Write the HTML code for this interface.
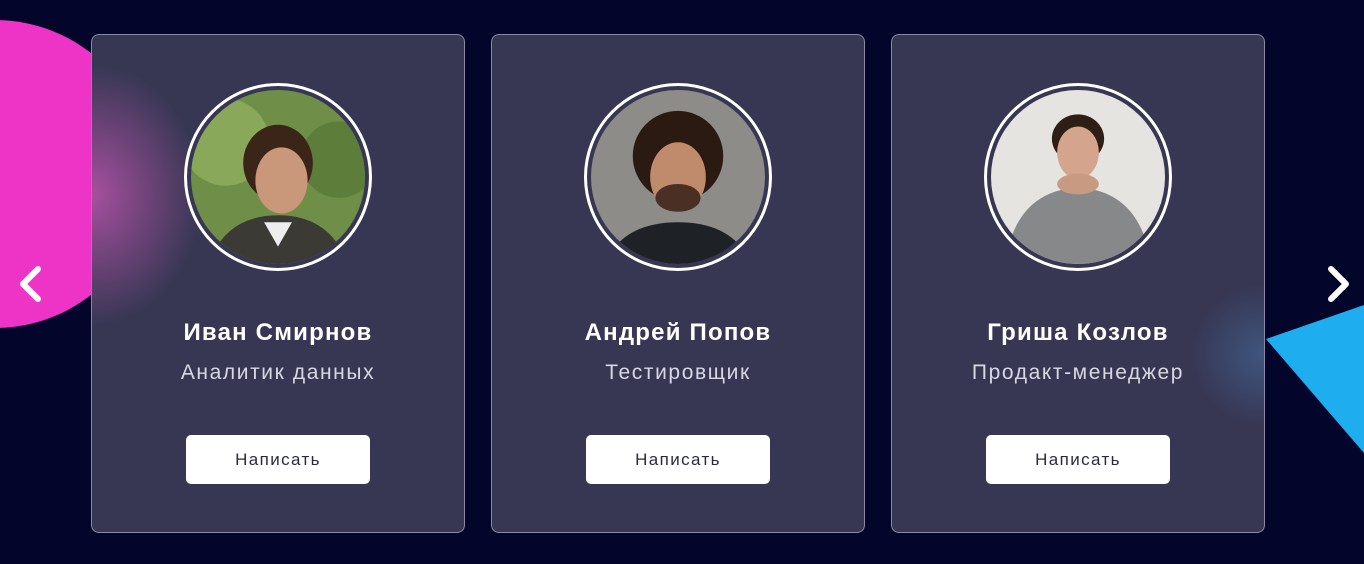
<!DOCTYPE html>
<html><head><meta charset="utf-8"><style>
*{margin:0;padding:0;box-sizing:border-box}
body{width:1364px;height:564px;background:#03062a;position:relative;overflow:hidden;font-family:"Liberation Sans",sans-serif}
.pink{position:absolute;left:-160px;top:20px;width:310px;height:308px;border-radius:50%;background:#ee34c6}
.tri{position:absolute;left:0;top:0}
.card{position:absolute;top:34px;width:374px;height:499px;border:1px solid #8a8aa6;border-radius:8px;background:#373754;overflow:hidden}
.glow{position:absolute;border-radius:50%}
.av{position:absolute;left:92px;top:48px;width:188px;height:188px;border-radius:50%;border:3px solid #fff;padding:4px;background:#373754}
.av svg{display:block;width:100%;height:100%;border-radius:50%}
.name{position:absolute;top:284px;width:100%;text-align:center;color:#fff;font-weight:bold;font-size:24px;letter-spacing:1.2px}
.role{position:absolute;top:326px;width:100%;text-align:center;color:#d8d8e2;font-size:21px;letter-spacing:1.6px}
.btn{position:absolute;left:94px;top:400px;width:184px;height:49px;background:#fff;border-radius:5px;text-align:center;line-height:49px;color:#2a2a44;font-size:17px;letter-spacing:1.4px}
.arr{position:absolute;top:265px}
</style></head><body>
<div class="pink"></div>
<svg class="tri" width="1364" height="564"><polygon points="1266,339 1364,305 1364,453" fill="#1eaef0"/></svg>

<div class="card" style="left:91px">
<div class="glow" style="left:-110px;top:30px;width:220px;height:260px;background:radial-gradient(closest-side,rgba(214,90,190,.7),rgba(214,90,190,0))"></div>
<div class="av"><svg viewBox="0 0 100 100"><rect width="100" height="100" fill="#6f8f48"/><circle cx="20" cy="30" r="25" fill="#8aa85a"/><circle cx="85" cy="40" r="22" fill="#5d7d3a"/><ellipse cx="50" cy="42" rx="20" ry="22" fill="#3a2518"/><ellipse cx="52" cy="52" rx="15" ry="19" fill="#c9977a"/><path d="M10 100 Q20 72 50 72 Q80 72 90 100Z" fill="#3b3a34"/><path d="M42 76 L50 90 L58 76Z" fill="#eee"/></svg></div>
<div class="name">Иван Смирнов</div><div class="role">Аналитик данных</div><div class="btn">Написать</div></div>

<div class="card" style="left:491px">
<div class="av"><svg viewBox="0 0 100 100"><rect width="100" height="100" fill="#8d8c88"/><ellipse cx="50" cy="38" rx="26" ry="26" fill="#2a1a12"/><ellipse cx="50" cy="50" rx="16" ry="20" fill="#c08a6c"/><ellipse cx="50" cy="62" rx="13" ry="8" fill="#4a3024"/><path d="M8 100 Q18 76 50 76 Q82 76 92 100Z" fill="#1e2226"/></svg></div>
<div class="name">Андрей Попов</div><div class="role">Тестировщик</div><div class="btn">Написать</div></div>

<div class="card" style="left:891px">
<div class="glow" style="left:300px;top:250px;width:140px;height:140px;background:radial-gradient(closest-side,rgba(70,110,160,.55),rgba(70,110,160,0))"></div>
<div class="av"><svg viewBox="0 0 100 100"><rect width="100" height="100" fill="#e6e4e0"/><ellipse cx="50" cy="28" rx="15" ry="14" fill="#2e1e16"/><ellipse cx="50" cy="36" rx="12" ry="15" fill="#d4a58c"/><path d="M8 100 Q14 58 50 56 Q86 58 92 100Z" fill="#86888a"/><ellipse cx="50" cy="54" rx="12" ry="6" fill="#c99a82"/></svg></div>
<div class="name">Гриша Козлов</div><div class="role">Продакт-менеджер</div><div class="btn">Написать</div></div>

<svg class="arr" style="left:16px" width="28" height="38"><path d="M22 4 L7 19 L22 34" stroke="#fff" stroke-width="6" fill="none" stroke-linecap="round" stroke-linejoin="round"/></svg>
<svg class="arr" style="left:1325px" width="28" height="38"><path d="M6 4 L21 19 L6 34" stroke="#fff" stroke-width="6" fill="none" stroke-linecap="round" stroke-linejoin="round"/></svg>
</body></html>
